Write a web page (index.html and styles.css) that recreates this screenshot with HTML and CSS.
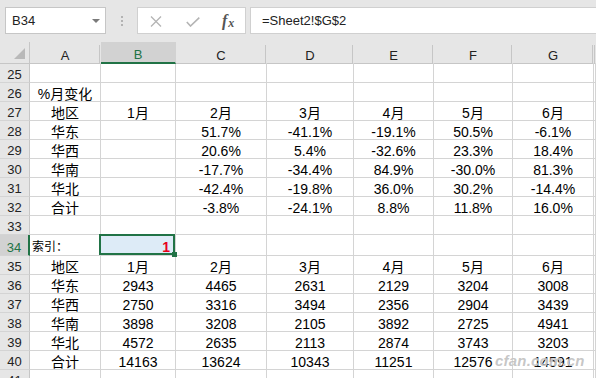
FILE: index.html
```html
<!DOCTYPE html>
<html lang="zh-CN">
<head>
<meta charset="utf-8">
<title>Sheet</title>
<link rel="stylesheet" href="styles.css">
</head>
<body>
<div class="toolbar">
  <div class="namebox"><span>B34</span><svg class="dd" width="8" height="4" viewBox="0 0 8 4"><path d="M0 0H8L4 4Z" fill="#7a7a7a"/></svg></div>
  <div class="dots"><i></i><i></i><i></i></div>
  <div class="fbtns">
    <svg class="ico-x" width="12" height="11" viewBox="0 0 12 11"><path d="M1 0.5L11 10.5M11 0.5L1 10.5" stroke="#b4b4b4" stroke-width="1.3" fill="none"/></svg>
    <svg class="ico-ok" width="14" height="10" viewBox="0 0 14 10"><path d="M0.8 5L4.5 9L13.3 0.6" stroke="#b4b4b4" stroke-width="1.6" fill="none"/></svg>
    <span class="fx"><span class="f">f</span><span class="x">x</span></span>
  </div>
  <div class="finput">=Sheet2!$G$2</div>
</div>
<div class="sheet">
  <div class="row hdr"><div class="rh corner"><svg width="11" height="11" viewBox="0 0 11 11"><path d="M11 0V11H0Z" fill="#b9b9b9"/></svg></div><div>A</div><div class="sel">B</div><div>C</div><div>D</div><div>E</div><div>F</div><div>G</div><div></div></div>
  <div class="row"><div class="rh">25</div><div></div><div></div><div></div><div></div><div></div><div></div><div></div><div></div></div>
  <div class="row"><div class="rh">26</div><div>%月变化</div><div></div><div></div><div></div><div></div><div></div><div></div><div></div></div>
  <div class="row"><div class="rh">27</div><div>地区</div><div>1月</div><div>2月</div><div>3月</div><div>4月</div><div>5月</div><div>6月</div><div></div></div>
  <div class="row"><div class="rh">28</div><div>华东</div><div></div><div>51.7%</div><div>-41.1%</div><div>-19.1%</div><div>50.5%</div><div>-6.1%</div><div></div></div>
  <div class="row"><div class="rh">29</div><div>华西</div><div></div><div>20.6%</div><div>5.4%</div><div>-32.6%</div><div>23.3%</div><div>18.4%</div><div></div></div>
  <div class="row"><div class="rh">30</div><div>华南</div><div></div><div>-17.7%</div><div>-34.4%</div><div>84.9%</div><div>-30.0%</div><div>81.3%</div><div></div></div>
  <div class="row"><div class="rh">31</div><div>华北</div><div></div><div>-42.4%</div><div>-19.8%</div><div>36.0%</div><div>30.2%</div><div>-14.4%</div><div></div></div>
  <div class="row"><div class="rh">32</div><div>合计</div><div></div><div>-3.8%</div><div>-24.1%</div><div>8.8%</div><div>11.8%</div><div>16.0%</div><div></div></div>
  <div class="row"><div class="rh">33</div><div></div><div></div><div></div><div></div><div></div><div></div><div></div><div></div></div>
  <div class="row tall"><div class="rh act">34</div><div class="label">索引：</div><div class="active">1</div><div></div><div></div><div></div><div></div><div></div><div></div></div>
  <div class="row"><div class="rh">35</div><div>地区</div><div>1月</div><div>2月</div><div>3月</div><div>4月</div><div>5月</div><div>6月</div><div></div></div>
  <div class="row"><div class="rh">36</div><div>华东</div><div>2943</div><div>4465</div><div>2631</div><div>2129</div><div>3204</div><div>3008</div><div></div></div>
  <div class="row"><div class="rh">37</div><div>华西</div><div>2750</div><div>3316</div><div>3494</div><div>2356</div><div>2904</div><div>3439</div><div></div></div>
  <div class="row"><div class="rh">38</div><div>华南</div><div>3898</div><div>3208</div><div>2105</div><div>3892</div><div>2725</div><div>4941</div><div></div></div>
  <div class="row"><div class="rh">39</div><div>华北</div><div>4572</div><div>2635</div><div>2113</div><div>2874</div><div>3743</div><div>3203</div><div></div></div>
  <div class="row"><div class="rh">40</div><div>合计</div><div>14163</div><div>13624</div><div>10343</div><div>11251</div><div>12576</div><div>14591</div><div></div></div>
  <div class="row"><div class="rh">41</div><div></div><div></div><div></div><div></div><div></div><div></div><div></div><div></div></div>
</div>
<div class="watermark">cfan.com.cn</div>
</body>
</html>
```
FILE: styles.css
```css
html, body {
  margin: 0;
  padding: 0;
}
body {
  width: 596px;
  height: 378px;
  overflow: hidden;
  position: relative;
  background: #fff;
  font-family: "Liberation Sans", "Noto Sans CJK SC", sans-serif;
  color: #000;
}

/* formula bar */
.toolbar {
  height: 42px;
  box-sizing: border-box;
  padding-top: 7px;
  background: #e6e6e6;
  display: flex;
  align-items: flex-start;
}
.namebox {
  margin-left: 5px;
  width: 101px;
  height: 27px;
  box-sizing: border-box;
  border: 1px solid #c6c6c6;
  background: #fff;
  display: flex;
  align-items: center;
  justify-content: space-between;
  padding: 0 5px 0 6px;
  font-size: 13px;
  color: #222;
}
.dd {
  margin-top: 1px;
}
.dots {
  margin-left: 15px;
  margin-top: 9px;
  width: 2px;
  display: flex;
  flex-direction: column;
  gap: 2px;
}
.dots i {
  display: block;
  width: 2px;
  height: 2px;
  background: #b3b3b3;
}
.fbtns {
  margin-left: 14px;
  width: 109px;
  height: 27px;
  box-sizing: border-box;
  border: 1px solid #d0d0d0;
  background: #fff;
  display: flex;
  align-items: center;
  padding-left: 12px;
}
.ico-x {
  margin-top: 1px;
}
.ico-ok {
  margin-left: 24px;
  margin-top: 2px;
}
.fx {
  margin-left: 22px;
  font-family: "Liberation Serif", serif;
  font-style: italic;
  color: #555;
  display: flex;
  align-items: flex-end;
  line-height: 1;
}
.fx .f {
  font-size: 16px;
  font-weight: bold;
}
.fx .x {
  font-size: 12px;
  font-weight: bold;
  margin-left: 1px;
}
.finput {
  margin-left: 4px;
  margin-right: -4px;
  flex: 1;
  height: 27px;
  box-sizing: border-box;
  border: 1px solid #d0d0d0;
  background: #fff;
  padding-left: 11px;
  display: flex;
  align-items: center;
  font-size: 13px;
  color: #222;
}

/* sheet grid */
.row {
  display: grid;
  grid-template-columns: 30px 71px 75px 91px 87px 80px 79px 81px 1fr;
  height: 19px;
}
.row.tall {
  height: 21px;
}
.row > div {
  box-sizing: border-box;
  border-right: 1px solid #d4d4d4;
  border-bottom: 1px solid #d4d4d4;
  display: flex;
  align-items: flex-end;
  justify-content: center;
  font-size: 14px;
  line-height: 14px;
  white-space: nowrap;
  overflow: hidden;
}
.row > .rh {
  background: #e6e6e6;
  border-right-color: #c6c6c6;
  font-size: 13px;
  color: #222;
}
.row > .rh.act {
  background: #d2d2d2;
  color: #217346;
  border-right: 2px solid #217346;
}
.row.hdr {
  height: 22px;
}
.row.hdr > div {
  background: linear-gradient(#c6c6c6, #c6c6c6) right 3px / 1px calc(100% - 3px) no-repeat, #e6e6e6;
  border-right: 1px solid transparent;
  border-bottom: 1px solid #c6c6c6;
  font-size: 13px;
  color: #222;
}
.row.hdr > .corner {
  align-items: flex-end;
  justify-content: flex-end;
  padding: 0 4px 4px 0;
  border-right: 1px solid #c6c6c6;
  background: #e6e6e6;
}
.row.hdr > .sel {
  background: #d2d2d2;
  color: #217346;
  border-bottom: 2px solid #217346;
  padding-bottom: 0;
}
.row > .label {
  justify-content: flex-start;
  padding-left: 2px;
  font-size: 12px;
  line-height: 14px;
  padding-bottom: 1px;
}
.row > .active {
  position: relative;
  z-index: 2;
  overflow: visible;
  background: #ddebf7;
  justify-content: flex-end;
  padding-right: 5px;
  padding-bottom: 1px;
  color: #e8001c;
  font-weight: bold;
}
.active::before {
  content: "";
  position: absolute;
  left: -2px;
  top: -1px;
  right: 0;
  bottom: 0;
  border: 2px solid #217346;
}
.active::after {
  content: "";
  position: absolute;
  width: 5px;
  height: 5px;
  right: -2px;
  bottom: -2px;
  background: #217346;
}

.watermark {
  position: absolute;
  left: 495px;
  top: 352px;
  font-size: 15px;
  font-weight: bold;
  font-style: italic;
  font-family: "Liberation Sans", sans-serif;
  color: rgba(150, 150, 150, 0.55);
  text-shadow: 0 0 1px #fff;
  letter-spacing: 0.2px;
}
```
